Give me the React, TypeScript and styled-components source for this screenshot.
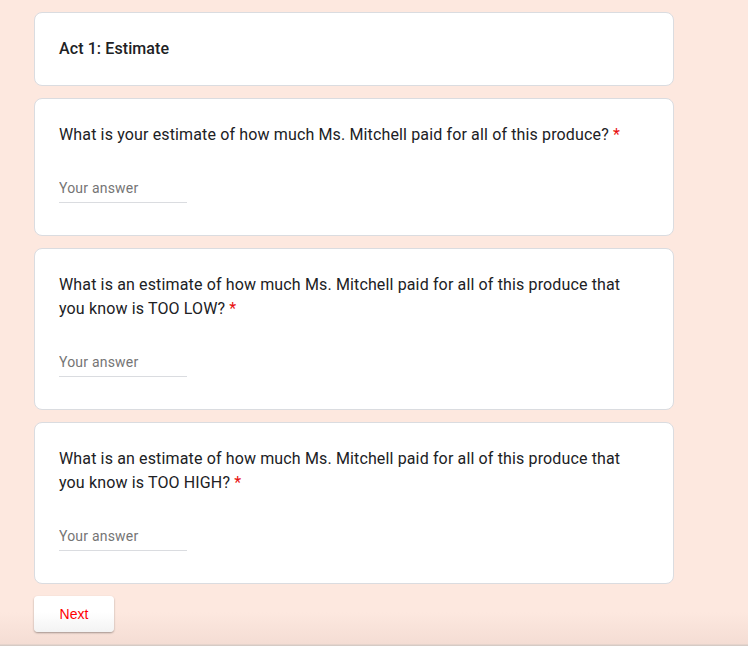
import styled, { createGlobalStyle } from 'styled-components'

const GlobalStyle = createGlobalStyle`
    html, body {
        margin: 0;
        padding: 0;
    }

    body {
        background: #fde8df;
        font-family: Roboto, 'Noto Sans', 'Liberation Sans', sans-serif;
        color: #202124;
    }
`

const questions = [
    'What is your estimate of how much Ms. Mitchell paid for all of this produce?',
    'What is an estimate of how much Ms. Mitchell paid for all of this produce that you know is TOO LOW?',
    'What is an estimate of how much Ms. Mitchell paid for all of this produce that you know is TOO HIGH?',
]

const App = () => {
    return (
        <>
            <GlobalStyle />
            <Page>
                <Column>
                    <Card>
                        <Title>Act 1: Estimate</Title>
                    </Card>

                    {questions.map(q => (
                        <Card key={q}>
                            <Question>
                                {q} <Required>*</Required>
                            </Question>
                            <AnswerInput placeholder='Your answer' type='text' />
                        </Card>
                    ))}

                    <NextButton type='button'>Next</NextButton>
                </Column>
            </Page>
        </>
    )
}

export default App

const Page = styled.div`
    min-height: 646px;
    box-sizing: border-box;
    padding: 12px 0 0 34px;
    background: linear-gradient(
        to bottom,
        #fde8df 0,
        #fde8df 612px,
        #f4ddd4 644px,
        #d6cbc5 645px,
        #d6cbc5 646px
    );
`

const Column = styled.div`
    display: flex;
    flex-direction: column;
    align-items: flex-start;
    gap: 12px;
    width: 640px;
`

const Card = styled.div`
    box-sizing: border-box;
    width: 100%;
    padding: 24px;
    background: #ffffff;
    border: 1px solid #dadce0;
    border-radius: 8px;
`

const Title = styled.div`
    font-size: 16px;
    line-height: 24px;
    font-weight: 500;
    letter-spacing: 0.1px;
    color: #202124;
`

const Question = styled.div`
    font-size: 16px;
    line-height: 24px;
    letter-spacing: 0.14px;
    color: #202124;
    margin-bottom: 16px;
`

const Required = styled.span`
    color: #e8100e;
`

const AnswerInput = styled.input`
    display: block;
    box-sizing: border-box;
    width: 128px;
    height: 40px;
    margin-bottom: 8px;
    padding: 15px 0 4px 0;
    border: 0;
    border-bottom: 1px solid #dadce0;
    outline: none;
    background: transparent;
    font-family: Roboto, 'Noto Sans', sans-serif;
    font-size: 14px;
    line-height: 20px;
    letter-spacing: 0.2px;
    color: #202124;

    ::placeholder {
        color: #70757a;
    }
`

const NextButton = styled.button`
    width: 80px;
    height: 36px;
    padding: 0;
    border: 0;
    border-radius: 4px;
    background: linear-gradient(to bottom, #ffffff 0%, #ffffff 45%, #f3f3f3 100%);
    box-shadow: 0 1px 2px rgba(0, 0, 0, 0.35);
    font-family: 'Liberation Sans', Arial, sans-serif;
    font-size: 14px;
    color: #ff0000;
    cursor: pointer;
`
